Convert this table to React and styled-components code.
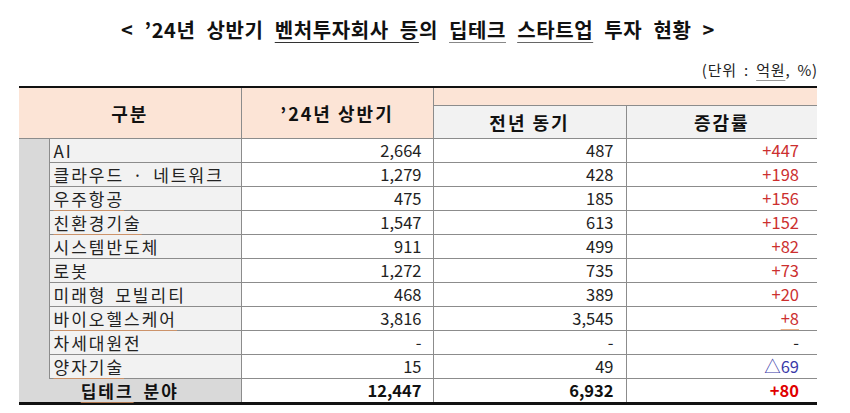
import React from "react";
import styled, { createGlobalStyle } from "styled-components";

const Global = createGlobalStyle`
  html, body { margin: 0; padding: 0; background: #fff; }
  body { font-family: "Noto Sans CJK KR", "Noto Sans", sans-serif; color: #1a1a1a; }
`;

const Page = styled.div`
  width: 850px;
  height: 413px;
  box-sizing: border-box;
  padding: 18px 0 0 19px;
  overflow: hidden;
`;

const Title = styled.h1`
  margin: 0;
  width: 798px;
  text-align: center;
  font-size: 20px;
  line-height: 24px;
  font-weight: 700;
  letter-spacing: 0.6px;
  word-spacing: 6px;
  color: #111;
`;

const Under = styled.span`
  text-decoration: underline;
  text-decoration-color: ${(p) => p.$color || "#555"};
  text-decoration-thickness: 1px;
  text-underline-offset: 4px;
`;

const Unit = styled.div`
  width: 799px;
  margin-top: 19px;
  text-align: right;
  font-size: 15px;
  line-height: 18px;
  color: #222;
  letter-spacing: 0.8px;
  word-spacing: 3px;
`;

const Table = styled.table`
  margin-top: 7px;
  width: 798px;
  border-collapse: collapse;
  table-layout: fixed;
  border-top: 2px solid #111;
  border-bottom: 3px solid #111;
`;

const Col = styled.col`
  width: ${(p) => p.$w}px;
`;

const HeadCell = styled.th`
  padding: 0;
  font-size: 18px;
  font-weight: 700;
  letter-spacing: 2px;
  text-align: center;
  color: #111;
  background: ${(p) => (p.$sub ? "#f2f2f2" : "#fce4d6")};
  border-right: ${(p) => (p.$last ? "none" : "1px solid #8c8c8c")};
  border-top: ${(p) => (p.$sub ? "1px solid #8c8c8c" : "none")};
  border-bottom: ${(p) => (p.$open ? "none" : "1px solid #8c8c8c")};
  height: ${(p) => p.$h}px;
  vertical-align: middle;
`;

const Indent = styled.td`
  padding: 0;
  background: #d9d9d9;
  border: none;
  border-right: 1px solid #8c8c8c;
`;

const Label = styled.td`
  padding: 0 0 0 4px;
  height: 23px;
  font-size: 17px;
  line-height: 23px;
  letter-spacing: 2px;
  word-spacing: 3px;
  background: #f2f2f2;
  border-right: 1px solid #8c8c8c;
  border-bottom: 1px solid #8c8c8c;
  white-space: nowrap;
  color: #222;
`;

const TotalLabel = styled.td`
  padding: 0;
  height: 23px;
  font-size: 17px;
  line-height: 23px;
  font-weight: 700;
  letter-spacing: 2px;
  word-spacing: 4px;
  text-align: center;
  background: #d9d9d9;
  border-right: 1px solid #8c8c8c;
  color: #111;
`;

const Num = styled.td`
  padding: 0 ${(p) => p.$pad}px 0 0;
  height: 23px;
  font-size: 16.5px;
  line-height: 23px;
  text-align: right;
  font-weight: ${(p) => (p.$bold ? 700 : 400)};
  color: ${(p) => p.$color || "#222"};
  border-right: ${(p) => (p.$last ? "none" : "1px solid #8c8c8c")};
  border-bottom: ${(p) => (p.$total ? "none" : "1px solid #8c8c8c")};
  white-space: nowrap;
`;

const RED = "#cc2f2f";
const BLUE = "#3a3aa8";
const SQ = "rgba(225,150,95,0.75)";

const rows = [
  { name: "AI", cur: "2,664", prev: "487", rate: "+447" },
  { name: "클라우드 · 네트워크", cur: "1,279", prev: "428", rate: "+198" },
  { name: "우주항공", sq: true, cur: "475", prev: "185", rate: "+156" },
  { name: "친환경기술", sq: true, cur: "1,547", prev: "613", rate: "+152" },
  { name: "시스템반도체", cur: "911", prev: "499", rate: "+82" },
  { name: "로봇", cur: "1,272", prev: "735", rate: "+73" },
  { name: "미래형 모빌리티", cur: "468", prev: "389", rate: "+20" },
  { name: "바이오헬스케어", sq: true, cur: "3,816", prev: "3,545", rate: "+8", rateSq: true },
  { name: "차세대원전", cur: "-", prev: "-", rate: "-" },
  { name: "양자기술", sq: true, cur: "15", prev: "49", rate: "△69", neg: true },
];

const rateColor = (r) => (r.neg ? BLUE : r.rate === "-" ? "#222" : RED);

export default function App() {
  return (
    <>
      <Global />
      <Page>
        <Title>
          &lt; ’24년 상반기 <Under $color="#333">벤처투자회사 등</Under>의{" "}
          <Under $color="#888">딥테크</Under> <Under $color="#666">스타트업</Under> 투자 현황 &gt;
        </Title>
        <Unit>
          (단위 : <Under $color="#999">억원</Under>, %)
        </Unit>
        <Table>
          <colgroup>
            <Col $w={30} />
            <Col $w={192} />
            <Col $w={192} />
            <Col $w={193} />
            <Col $w={191} />
          </colgroup>
          <thead>
            <tr>
              <HeadCell colSpan={2} rowSpan={2} $h={17}>
                구분
              </HeadCell>
              <HeadCell rowSpan={2}>’24년 상반기</HeadCell>
              <HeadCell colSpan={2} $last $open $h={17} />
            </tr>
            <tr>
              <HeadCell $sub $h={32}>
                전년 동기
              </HeadCell>
              <HeadCell $sub $last $h={32}>
                증감률
              </HeadCell>
            </tr>
          </thead>
          <tbody>
            {rows.map((r, i) => (
              <tr key={r.name}>
                {i === 0 && <Indent rowSpan={rows.length} />}
                <Label>{r.sq ? <Under $color={SQ}>{r.name}</Under> : r.name}</Label>
                <Num $pad={11}>{r.cur}</Num>
                <Num $pad={12}>{r.prev}</Num>
                <Num $pad={18} $last $color={rateColor(r)}>
                  {r.rateSq ? <Under $color={SQ}>{r.rate}</Under> : r.rate}
                </Num>
              </tr>
            ))}
            <tr>
              <TotalLabel colSpan={2}>
                <Under $color={SQ}>딥테크</Under> 분야
              </TotalLabel>
              <Num $pad={11} $bold $total $color="#111">12,447</Num>
              <Num $pad={12} $bold $total $color="#111">6,932</Num>
              <Num $pad={18} $bold $total $last $color="#e00000">+80</Num>
            </tr>
          </tbody>
        </Table>
      </Page>
    </>
  );
}
